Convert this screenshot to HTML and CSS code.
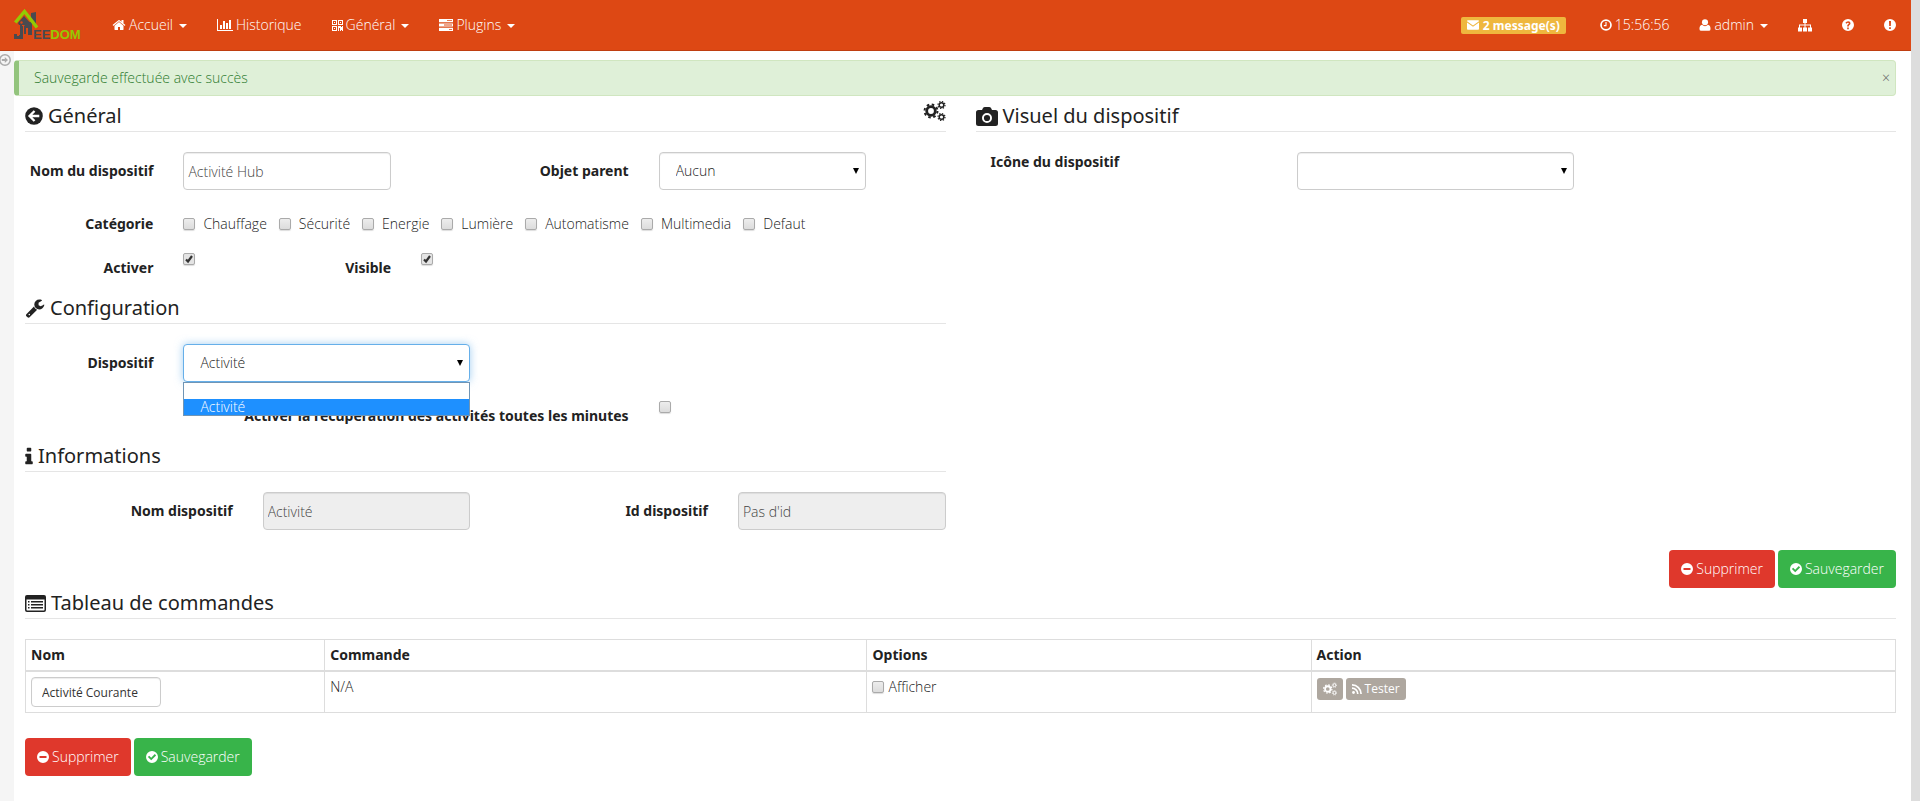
FILE: index.html
```html
<!DOCTYPE html>
<html lang="fr">
<head>
<meta charset="utf-8">
<title>Jeedom</title>
<link rel="stylesheet" href="styles.css">
</head>
<body>
<svg class="sprite" aria-hidden="true">
  <symbol id="home" viewBox="0 0 1792 1792"><path d="M1472 992v480q0 26-19 45t-45 19h-384v-384h-256v384h-384q-26 0-45-19t-19-45v-480q0-1 .5-3t.5-3l575-474 575 474q1 2 1 6zm223-69l-62 74q-8 9-21 11h-3q-13 0-21-7l-692-577-692 577q-12 8-24 7-13-2-21-11l-62-74q-8-10-7-23.500t11-21.500l719-599q32-26 76-26t76 26l244 204v-195q0-14 9-23t23-9h192q14 0 23 9t9 23v408l219 182q10 8 11 21.500t-7 23.500z"/></symbol>
  <symbol id="chart" viewBox="0 0 2048 1792"><path d="M640 896v512h-256v-512h256zm384-512v1024h-256v-1024h256zm1024 1152v128h-2048v-1536h128v1408h1920zm-640-896v768h-256v-768h256zm384-384v1152h-256v-1152h256z"/></symbol>
  <symbol id="qr" viewBox="0 0 11 11"><path fill-rule="evenodd" d="M0 0h5v5H0zM1 1v3h3V1zM2 2h1v1H2zM6 0h5v5H6zM7 1v3h3V1zM8 2h1v1H8zM0 6h5v5H0zM1 7v3h3V7zM2 8h1v1H2zM6 6h3v1h1V6h1v4H8V8H7v3H6zM8 10h1v1H8zM10 10h1v1h-1z"/></symbol>
  <symbol id="server" viewBox="0 0 14 12"><path fill-rule="evenodd" d="M0 0h14v3.200H0zM8 1.200v.8h5v-.8zM0 4.400h14v3.200H0zM5 5.600v.8h8v-.8zM0 8.800h14V12H0zM10 10v.8h3V10z"/></symbol>
  <symbol id="mail" viewBox="0 0 14 12"><path d="M0 1.500Q0 .5 1 .5h12q1 0 1 1L7 6.600zM0 3l7 5 7-5v7.500q0 1-1 1H1q-1 0-1-1z"/></symbol>
  <symbol id="clock" viewBox="0 0 14 14"><circle cx="7" cy="7" r="5.800" fill="none" stroke="currentColor" stroke-width="2"/><path d="M7 3.500v4.200H4.500" fill="none" stroke="currentColor" stroke-width="1.300"/></symbol>
  <symbol id="user" viewBox="0 0 12 13"><circle cx="6" cy="3.600" r="3.300"/><path d="M2.800 6.300Q6 9.200 9.200 6.300 12 6.800 12 10.800q0 2-2 2H2q-2 0-2-2 0-4 2.800-4.500z"/></symbol>
  <symbol id="sitemap" viewBox="0 0 14 13"><path d="M5 .5h4v4H7.500V6H13v3h1v4h-4V9h2V7H7.500v2H9v4H5V9h1.500V7H2v2h2v4H0V9h1V6h5.500V4.500H5z"/></symbol>
  <symbol id="question" viewBox="0 0 12 12"><path fill-rule="evenodd" d="M6 0a6 6 0 1 1 0 12A6 6 0 0 1 6 0zM5.200 8.600v1.600h1.600V8.600zM3.400 3.800l1.100.9Q5.200 3.700 6 3.700q.8 0 .8.7 0 .5-.7.9-.9.600-.9 1.700v.6h1.600V7q0-.4.7-.9 1-.7 1-1.800Q8.500 2.200 6.200 2.200q-1.800 0-2.800 1.600z"/></symbol>
  <symbol id="exclam" viewBox="0 0 12 12"><path fill-rule="evenodd" d="M6 0a6 6 0 1 1 0 12A6 6 0 0 1 6 0zM5 2l.2 5h1.600L7 2zM5.100 8.300V10h1.800V8.300z"/></symbol>
  <symbol id="left" viewBox="0 0 17 17"><circle cx="8.500" cy="8.500" r="8.300"/><path d="M9 3.800L4.300 8.500 9 13.200M4.500 8.500h9" fill="none" stroke="#fff" stroke-width="2.200"/></symbol>
  <symbol id="expand" viewBox="0 0 12 12"><circle cx="6" cy="6" r="5.200" fill="none" stroke="currentColor" stroke-width="1.500"/><path d="M2.800 5.100h3V3l3.200 3-3.200 3V6.900h-3z"/></symbol>
  <symbol id="cogs" viewBox="0 0 22 20"><g fill="none" stroke="currentColor"><circle cx="7.500" cy="10" r="4.300" stroke-width="2.800"/><circle cx="7.500" cy="10" r="6.500" stroke-width="1.900" stroke-dasharray="2.550 2.550"/><circle cx="18" cy="4" r="2.300" stroke-width="1.500"/><circle cx="18" cy="4" r="3.500" stroke-width="1.200" stroke-dasharray="1.370 1.370"/><circle cx="18" cy="16" r="2.300" stroke-width="1.500"/><circle cx="18" cy="16" r="3.500" stroke-width="1.200" stroke-dasharray="1.370 1.370"/></g></symbol>
  <symbol id="camera" viewBox="0 0 22 19"><path fill-rule="evenodd" d="M2.500 3H6l1-2Q7.500 0 9 0h4q1.500 0 2 1l1 2h3.500Q22 3 22 5.500v11q0 2.500-2.500 2.500h-17Q0 19 0 16.500v-11Q0 3 2.500 3zM11 6a5 5 0 1 0 0 10 5 5 0 0 0 0-10zM11 7.900a3.100 3.100 0 1 1 0 6.200 3.100 3.100 0 0 1 0-6.200z"/></symbol>
  <symbol id="wrench" viewBox="0 0 1792 1792"><path d="M448 1472q0-26-19-45t-45-19-45 19-19 45 19 45 45 19 45-19 19-45zm644-420l-682 682q-37 37-90 37-52 0-91-37l-106-108q-38-36-38-90 0-53 38-91l681-681q39 98 114.500 173.500t173.500 114.500zm634-435q0 39-23 106-47 134-164.500 217.500t-258.500 83.500q-185 0-316.500-131.500t-131.500-316.500 131.500-316.500 316.500-131.500q58 0 121.500 16.500t107.500 46.500q16 11 16 28t-16 28l-293 169v224l193 107q5-3 79-48.500t135.500-81 70.500-35.500q15 0 23.500 10t8.500 25z"/></symbol>
  <symbol id="info" viewBox="576 64 640 1536"><path d="M1216 1344v128q0 26-19 45t-45 19h-512q-26 0-45-19t-19-45v-128q0-26 19-45t45-19h64v-384h-64q-26 0-45-19t-19-45v-128q0-26 19-45t45-19h384q26 0 45 19t19 45v576h64q26 0 45 19t19 45zm-128-1152v192q0 26-19 45t-45 19h-256q-26 0-45-19t-19-45v-192q0-26 19-45t45-19h256q26 0 45 19t19 45z"/></symbol>
  <symbol id="list" viewBox="0 0 21 17"><path fill-rule="evenodd" d="M2 0h17q2 0 2 2v13q0 2-2 2H2q-2 0-2-2V2q0-2 2-2zM1.500 4.500v10.500l.5.500h17l.5-.5V4.500zM3 6h1.500v1.500H3zM3 9h1.500v1.500H3zM3 12h1.500v1.500H3zM6 6h12v1.500H6zM6 9h12v1.500H6zM6 12h12v1.500H6z"/></symbol>
  <symbol id="minus" viewBox="0 0 12 12"><path fill-rule="evenodd" d="M6 0a6 6 0 1 1 0 12A6 6 0 0 1 6 0zM2.500 5v2h7V5z"/></symbol>
  <symbol id="check" viewBox="0 0 12 12"><path fill-rule="evenodd" d="M6 0a6 6 0 1 1 0 12A6 6 0 0 1 6 0zM1.900 6l3.300 3.300 4.900-4.900L8.800 3.100 5.200 6.700l-2-2z"/></symbol>
  <symbol id="rss" viewBox="0 0 10 10"><circle cx="1.500" cy="8.500" r="1.400"/><path d="M0 4.200a5.800 5.800 0 0 1 5.800 5.800M0 .9A9.100 9.100 0 0 1 9.100 10" fill="none" stroke="currentColor" stroke-width="1.700"/></symbol>
</svg>

<nav class="navbar">
  <a class="brand" href="#" aria-label="Jeedom">
    <svg width="70" height="32" viewBox="0 0 70 32">
      <path fill="#4a4a4f" d="M17 4l5-1v14l-5-5zM4 14l6-7 8 9v10h-6V15H9v15H0v-5h3v2h2V16z"/>
      <path fill="#4a4a4f" d="M9 13h9v12H9z"/>
      <path fill="none" stroke="#de4814" stroke-width="1" d="M5.500 16v10M9.500 17v13M8 16.500h2.500"/>
      <circle cx="7.500" cy="13.500" r="1.200" fill="#de4814"/>
      <path fill="#de4814" d="M12 19h2v7h-2z"/>
      <path fill="none" stroke="#94ca02" stroke-width="3.400" d="M1.300 13.500L10.500 2.500l12.500 16"/>
      <text x="19" y="30" class="brand-text"><tspan fill="#4a4a4f">EE</tspan><tspan fill="#94ca02">DOM</tspan></text>
    </svg>
  </a>
  <ul class="menu">
    <li><a href="#"><svg class="i14"><use href="#home"/></svg>Accueil<span class="caret"></span></a></li>
    <li><a href="#"><svg class="i16"><use href="#chart"/></svg>Historique</a></li>
    <li><a href="#"><svg class="i11"><use href="#qr"/></svg>Général<span class="caret"></span></a></li>
    <li><a href="#"><svg class="i14"><use href="#server"/></svg>Plugins<span class="caret"></span></a></li>
  </ul>
  <ul class="menu tools">
    <li><a href="#" class="badge"><svg class="i12"><use href="#mail"/></svg>2 message(s)</a></li>
    <li><a href="#"><svg class="i12"><use href="#clock"/></svg>15:56:56</a></li>
    <li><a href="#"><svg class="i12"><use href="#user"/></svg>admin<span class="caret"></span></a></li>
    <li><a href="#" aria-label="Réseau"><svg class="i14"><use href="#sitemap"/></svg></a></li>
    <li><a href="#" aria-label="Aide"><svg class="i12"><use href="#question"/></svg></a></li>
    <li><a href="#" aria-label="Rapport"><svg class="i12"><use href="#exclam"/></svg></a></li>
  </ul>
</nav>

<div class="shell">
  <aside class="rail"><button type="button" class="expand" aria-label="Ouvrir le menu"><svg class="i12"><use href="#expand"/></svg></button></aside>
  <main>
    <div class="alert" role="alert"><span>Sauvegarde effectuée avec succès</span><button type="button" aria-label="Fermer">×</button></div>
    <div class="content">
      <div class="columns">
        <form class="form">
          <h2><svg class="i18"><use href="#left"/></svg>Général<a class="cogs" href="#" aria-label="Configuration avancée"><svg><use href="#cogs"/></svg></a></h2>
          <div class="row">
            <label class="c2" for="nom">Nom du dispositif</label>
            <div class="c3"><input class="field" type="text" id="nom" value="Activité Hub"></div>
            <label class="c3" for="parent">Objet parent</label>
            <div class="c3"><select class="field" id="parent"><option>Aucun</option></select></div>
          </div>
          <div class="row">
            <span class="c2 label">Catégorie</span>
            <div class="c10 checks">
              <label><input type="checkbox">Chauffage</label>
              <label><input type="checkbox">Sécurité</label>
              <label><input type="checkbox">Energie</label>
              <label><input type="checkbox">Lumière</label>
              <label><input type="checkbox">Automatisme</label>
              <label><input type="checkbox">Multimedia</label>
              <label><input type="checkbox">Defaut</label>
            </div>
          </div>
          <div class="row">
            <label class="c2" for="activer">Activer</label>
            <div class="c1"><input type="checkbox" id="activer" checked></div>
            <label class="c2" for="visible">Visible</label>
            <div class="c1"><input type="checkbox" id="visible" checked></div>
          </div>
          <h2><svg class="i20"><use href="#wrench"/></svg>Configuration</h2>
          <div class="row">
            <label class="c2" for="dispositif">Dispositif</label>
            <div class="c4 dropdown">
              <select class="field focused" id="dispositif"><option>Activité</option></select>
              <ul class="options" role="listbox"><li role="option"></li><li role="option" class="selected" aria-selected="true">Activité</li></ul>
            </div>
          </div>
          <div class="row">
            <label class="c8" for="recup">Activer la récupération des activités toutes les minutes</label>
            <div class="c1"><input type="checkbox" id="recup"></div>
          </div>
          <h2><svg class="i8"><use href="#info"/></svg>Informations</h2>
          <div class="row">
            <label class="c3" for="nomdisp">Nom dispositif</label>
            <div class="c3"><input class="field" type="text" id="nomdisp" value="Activité" disabled></div>
            <label class="c3" for="iddisp">Id dispositif</label>
            <div class="c3"><input class="field" type="text" id="iddisp" value="Pas d'id" disabled></div>
          </div>
        </form>
        <form class="form">
          <h2><svg class="i22"><use href="#camera"/></svg>Visuel du dispositif</h2>
          <div class="visual">
            <label for="icone">Icône du dispositif</label>
            <select class="field" id="icone"><option></option></select>
          </div>
        </form>
      </div>
      <div class="actions end">
        <button type="button" class="btn danger"><svg class="i12"><use href="#minus"/></svg>Supprimer</button>
        <button type="button" class="btn success"><svg class="i12"><use href="#check"/></svg>Sauvegarder</button>
      </div>
      <h2><svg class="i21"><use href="#list"/></svg>Tableau de commandes</h2>
      <table>
        <colgroup><col class="w-name"><col class="w-cmd"><col class="w-opt"><col></colgroup>
        <thead><tr><th>Nom</th><th>Commande</th><th>Options</th><th>Action</th></tr></thead>
        <tbody><tr>
          <td><input class="field small" type="text" value="Activité Courante" aria-label="Nom de la commande"></td>
          <td>N/A</td>
          <td><label class="show"><input type="checkbox">Afficher</label></td>
          <td><div class="cmds"><button type="button" class="mini" aria-label="Configurer"><svg class="i14"><use href="#cogs"/></svg></button><button type="button" class="mini"><svg class="i10"><use href="#rss"/></svg>Tester</button></div></td>
        </tr></tbody>
      </table>
      <div class="actions">
        <button type="button" class="btn danger"><svg class="i12"><use href="#minus"/></svg>Supprimer</button>
        <button type="button" class="btn success"><svg class="i12"><use href="#check"/></svg>Sauvegarder</button>
      </div>
    </div>
  </main>
</div>
</body>
</html>
```
FILE: styles.css
```css
* { box-sizing: border-box; }
html { background: #ddd; }
body {
  margin: 0 9px 0 0;
  min-height: 100vh;
  display: flex;
  flex-direction: column;
  background: #fff;
  color: #222;
  font: 300 14px/20px "Open Sans", sans-serif;
}
button, input, select { font: inherit; color: inherit; }
svg { fill: currentColor; flex: none; }
ul { list-style: none; margin: 0; padding: 0; }
a { color: inherit; text-decoration: none; }
.sprite { display: none; }

.i8 { width: 8px; height: 18px; }
.i10 { width: 10px; height: 10px; }
.i11 { width: 11px; height: 11px; }
.i12 { width: 12px; height: 12px; }
.i14 { width: 14px; height: 14px; }
.i16 { width: 16px; height: 14px; }
.i18 { width: 18px; height: 18px; }
.i20 { width: 20px; height: 20px; }
.i21 { width: 21px; height: 17px; }
.i22 { width: 22px; height: 19px; }

.navbar {
  display: flex;
  align-items: center;
  height: 51px;
  padding: 0 15px 0 14px;
  background: #dd4814;
  border-bottom: 1px solid #bf3e11;
  color: #fff;
}
.brand { display: flex; margin-right: 28px; }
.brand-text { font: bold 13px "Liberation Sans", sans-serif; }
.menu { display: flex; align-items: center; gap: 30px; }
.menu a { display: flex; align-items: center; gap: 3px; }
.tools { margin-left: auto; }
.caret { margin: 2px 0 0 3px; border: 4px solid transparent; border-top-color: #fff; border-bottom: 0; }
.menu .badge {
  height: 17px;
  padding: 0 6px;
  gap: 4px;
  margin-right: 4px;
  border-radius: 2px;
  background: #efb73e;
  font: 700 12px/17px "Noto Sans", sans-serif;
}

.shell { flex: 1; display: flex; }
.rail { width: 14px; background: #f5f5f5; }
.expand { display: flex; margin: 3px 0 0 -1px; padding: 0; border: 0; background: none; color: #aaa; }
main { flex: 1; min-width: 0; padding: 9px 15px 10px 0; }
.alert {
  display: flex;
  justify-content: space-between;
  align-items: center;
  height: 36px;
  padding: 0 5px 0 15px;
  border: 1px solid #d0e6c0;
  border-left: 5px solid #93c47d;
  border-radius: 4px;
  background: #dff0d8;
  color: #2c7a2d;
}
.alert button { padding: 0; border: 0; background: none; color: #666; }
.content { padding: 5px 0 0 11px; }
.columns { display: grid; grid-template-columns: 1fr 1fr; gap: 30px; }

h2 {
  display: flex;
  align-items: center;
  gap: 5px;
  height: 31px;
  margin: 0 0 20px;
  border-bottom: 1px solid #e5e5e5;
  font: 400 20px/30px "Noto Sans", sans-serif;
}
.cogs { align-self: flex-start; margin-left: auto; display: flex; }
.cogs svg { width: 23px; height: 20px; }

.row { display: grid; grid-template-columns: repeat(12, 1fr); margin: 0 -15px 15px; }
.row > * { padding: 0 15px; min-width: 0; min-height: 29px; }
.row > label, .label { padding-top: 9px; text-align: right; white-space: nowrap; }
.row > label, .label, .visual > label, th { font-family: "Noto Sans", sans-serif; font-weight: 700; }
.c1 { grid-column: span 1; }
.c2 { grid-column: span 2; }
.c3 { grid-column: span 3; }
.c4 { grid-column: span 4; }
.c8 { grid-column: span 8; }
.c10 { grid-column: span 10; }

.field {
  display: block;
  width: 100%;
  height: 38px;
  padding: 0 4px;
  border: 1px solid #ccc;
  border-radius: 4px;
  background: #fff;
  box-shadow: inset 0 1px 1px rgba(0, 0, 0, .075);
  color: #444;
}
.field:disabled { background: #eee; }
select.field {
  appearance: none;
  padding: 0 16px;
  color: #222;
  background: #fff url("data:image/svg+xml,%3Csvg xmlns='http://www.w3.org/2000/svg' width='6' height='6'%3E%3Cpath d='M0 0h6L3 6z'/%3E%3C/svg%3E") no-repeat right 6px center;
}
.field.focused { border-color: #66afe9; box-shadow: 0 0 8px rgba(102, 175, 233, .6); }

input[type="checkbox"] {
  appearance: none;
  flex: none;
  display: block;
  width: 12px;
  height: 12px;
  margin: 4px 0 0;
  border: 1px solid #aaa;
  border-radius: 2px;
  background: linear-gradient(#ededed, #dcdcdc);
  box-shadow: 0 1px 1px #ddd;
}
input[type="checkbox"]:checked {
  background: #e4e4e4 url("data:image/svg+xml,%3Csvg xmlns='http://www.w3.org/2000/svg' width='10' height='10'%3E%3Cpath d='M2 5.500l2 2 4-5.500' fill='none' stroke='%23333' stroke-width='2.200'/%3E%3C/svg%3E") no-repeat center;
}
.row > .checks { display: flex; gap: 12px; padding-top: 9px; }
.checks label { display: flex; gap: 8px; }

.dropdown { position: relative; }
.options {
  position: absolute;
  z-index: 1;
  top: 38px;
  left: 15px;
  right: 15px;
  border: 1px solid #7095b5;
  background: #fff;
}
.options li { height: 16px; padding: 0 16px; line-height: 16px; }
.options .selected { background: #1e90ff; color: #fff; }

.visual { display: grid; grid-template-columns: repeat(3, 1fr); }
.visual > label { padding-left: 15px; }
.visual > .field { width: auto; margin: 0 15px; }

.actions { display: flex; gap: 3px; }
.end { justify-content: flex-end; margin-top: 5px; }
.btn {
  display: flex;
  align-items: center;
  gap: 3px;
  height: 38px;
  padding: 0 12px;
  border: 0;
  border-radius: 4px;
  color: #fff;
}
.danger { background: #df382c; }
.success { background: #38b44a; }

table { width: 100%; margin-bottom: 25px; border-collapse: collapse; table-layout: fixed; }
.w-name { width: 16%; }
.w-cmd { width: 29%; }
.w-opt { width: 23.750%; }
th, td { padding: 5px; border: 1px solid #ddd; text-align: left; vertical-align: top; }
th { border-bottom-width: 2px; }
.field.small { width: 130px; height: 30px; padding: 0 10px; font-size: 12px; font-weight: 400; color: #333; }
.show { display: inline-flex; gap: 4px; }
.cmds { display: flex; gap: 3px; margin-top: 1px; }
.mini {
  display: flex;
  align-items: center;
  gap: 3px;
  height: 22px;
  padding: 0 6px;
  border: 0;
  border-radius: 3px;
  background: #aea79f;
  color: #fff;
  font-size: 12px;
  font-weight: 400;
}
```
